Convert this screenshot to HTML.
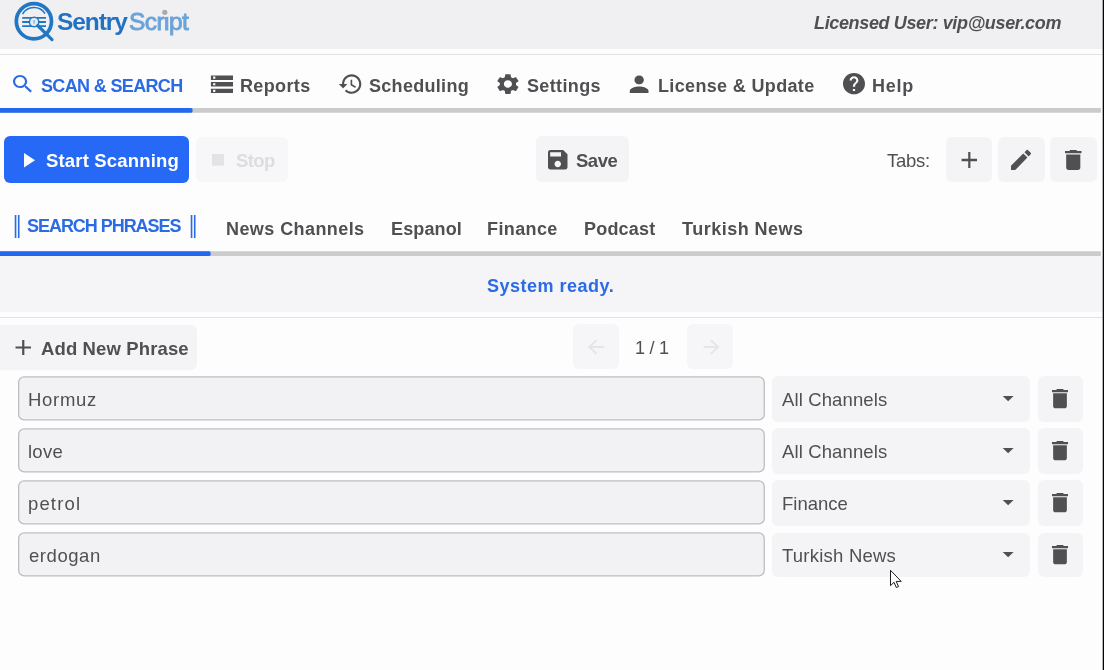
<!DOCTYPE html>
<html><head><meta charset="utf-8"><title>SentryScript</title>
<style>
*{box-sizing:border-box;margin:0;padding:0}
html,body{width:1104px;height:670px;overflow:hidden;background:#fefdfe;font-family:"Liberation Sans","DejaVu Sans",sans-serif;color:#4a4a4d}
.abs{position:absolute}
.t{position:absolute;white-space:nowrap;line-height:1;will-change:transform}
#hdr{left:0;top:0;width:1104px;height:49px;background:#f0eff1}
.hl{left:0;width:1104px;height:1px;background:#e2e1e4}
.btn{position:absolute;background:#f4f3f5;border-radius:6px}
.inp{position:absolute;left:18px;width:747px;height:44px;border:1px solid #bfbfc2;border-radius:6px;background:#f2f1f3}
.sel{position:absolute;left:772px;width:258px;height:46px;background:#f4f3f5;border-radius:6px}
.del{position:absolute;left:1038px;width:45px;height:46px;background:#f4f3f5;border-radius:6px}
.bb{font-size:20px;color:#2b6be4;transform:scaleY(1.55);transform-origin:50% 50%}
svg{position:absolute;left:0;top:0;overflow:visible}
</style></head><body>
<div class="abs" id="hdr"></div>
<div class="abs hl" style="top:54px"></div>
<div class="abs" style="left:0;top:256px;width:1104px;height:56px;background:#f5f4f7"></div>
<div class="abs hl" style="top:317px"></div>

<div class="btn" style="left:4px;top:136px;width:185px;height:47px;background:#2669f7"></div>
<div class="btn" style="left:196px;top:137px;width:92px;height:45px;background:#f7f6f8"></div>
<div class="btn" style="left:536px;top:136px;width:93px;height:46px"></div>
<div class="btn" style="left:946px;top:137px;width:46px;height:45px"></div>
<div class="btn" style="left:998px;top:137px;width:47px;height:45px"></div>
<div class="btn" style="left:1050px;top:137px;width:47px;height:45px"></div>
<div class="btn" style="left:0;top:325px;width:197px;height:45px;border-radius:0 6px 6px 0"></div>
<div class="btn" style="left:573px;top:324px;width:46px;height:45px;background:#f6f5f7"></div>
<div class="btn" style="left:687px;top:324px;width:46px;height:45px;background:#f6f5f7"></div>
<div class="sel" style="top:376px"></div><div class="del" style="top:376px"></div>
<div class="sel" style="top:428px"></div><div class="del" style="top:428px"></div>
<div class="sel" style="top:480px"></div><div class="del" style="top:480px"></div>
<div class="sel" style="top:533px;height:44px"></div><div class="del" style="top:533px;height:44px"></div>

<svg width="1104" height="670" viewBox="0 0 1104 670">
<rect x="-3" y="107.900" width="1104" height="4.800" rx="1" fill="#cbcacd"/>
<rect x="-3" y="107.900" width="195.500" height="4.800" rx="1.500" fill="#2468f2"/>
<rect x="-3" y="251.200" width="1104" height="4.700" rx="1" fill="#cbcacd"/>
<rect x="-3" y="251.200" width="213.600" height="4.700" rx="1.500" fill="#2468f2"/>
<rect x="18.650" y="376.90" width="745.600" height="43" rx="5.500" fill="#f2f1f3" stroke="#bebdc1" stroke-width="1.300"/>
<rect x="18.650" y="428.90" width="745.600" height="43" rx="5.500" fill="#f2f1f3" stroke="#bebdc1" stroke-width="1.300"/>
<rect x="18.650" y="480.90" width="745.600" height="43" rx="5.500" fill="#f2f1f3" stroke="#bebdc1" stroke-width="1.300"/>
<rect x="18.650" y="532.90" width="745.600" height="43" rx="5.500" fill="#f2f1f3" stroke="#bebdc1" stroke-width="1.300"/>
<g fill="none" stroke="#2277c4">
<circle cx="33.9" cy="21.3" r="17.6" stroke-width="3.7"/>
<path d="M22.5 14.2 A13.2 13.2 0 0 1 45 13.6" stroke-width="1.5"/>
<path d="M22.2 17.9H46M22.2 22H46M22.2 26.100H46" stroke-width="1.8"/>
<circle cx="34.1" cy="22" r="4.700" stroke-width="1.5" fill="#e4ebf4"/>
<path d="M34.1 20v3.600" stroke-width="1.300" stroke="#7faedb"/>
<path d="M37.7 25.500L52 39.600" stroke-width="3.200" stroke-linecap="round"/>
</g>
<path fill="#2b6be4" transform="translate(13.00 75.00) scale(1.0863 1.0006) translate(-3 -3)" d="M15.5 14h-.79l-.28-.27C15.41 12.59 16 11.11 16 9.5 16 5.91 13.09 3 9.5 3S3 5.91 3 9.5 5.91 16 9.5 16c1.61 0 3.09-.59 4.23-1.57l.27.28v.79l5 4.99L20.49 19l-4.99-5zm-6 0C7.01 14 5 11.99 5 9.5S7.01 5 9.5 5 14 7.01 14 9.5 11.99 14 9.5 14z"/>
<path fill="#505053" transform="translate(210.90 75.50) scale(1.1050 1.0938) translate(-2 -4)" d="M2 20h20v-4H2v4zm2-3h2v2H4v-2zM2 4v4h20V4H2zm4 3H4V5h2v2zm-4 7h20v-4H2v4zm2-3h2v2H4v-2z"/>
<path fill="#505053" transform="translate(338.80 74.30) scale(1.0714 1.0833) translate(-1 -3)" d="M13 3c-4.97 0-9 4.03-9 9H1l3.89 3.89.07.14L9 12H6c0-3.870 3.130-7 7-7s7 3.130 7 7-3.130 7-7 7c-1.930 0-3.680-.79-4.940-2.060l-1.420 1.420C8.270 19.990 10.510 21 13 21c4.970 0 9-4.030 9-9s-4.030-9-9-9zm-1 5v5l4.280 2.540.72-1.210-3.500-2.080V8H12z"/>
<path fill="#505053" transform="translate(497.30 73.80) scale(1.1277 1.0250) translate(-2.6 -2)" d="M19.14 12.94c.04-.3.06-.61.06-.94 0-.32-.02-.64-.07-.94l2.030-1.580c.18-.14.23-.41.12-.61l-1.920-3.320c-.12-.22-.37-.29-.59-.22l-2.390.96c-.5-.38-1.030-.7-1.620-.94l-.36-2.540c-.04-.24-.24-.41-.48-.41h-3.840c-.24 0-.43.17-.47.41l-.36 2.540c-.59.24-1.130.57-1.620.94l-2.390-.96c-.22-.08-.47 0-.59.22L2.740 8.870c-.12.21-.08.47.12.61l2.030 1.580c-.05.3-.09.63-.09.94s.02.64.07.94l-2.030 1.580c-.18.14-.23.41-.12.61l1.920 3.320c.12.22.37.29.59.22l2.390-.96c.5.38 1.030.7 1.620.94l.36 2.540c.05.24.24.41.48.41h3.840c.24 0 .44-.17.47-.41l.36-2.540c.59-.24 1.130-.56 1.620-.94l2.390.96c.22.08.47 0 .59-.22l1.920-3.320c.12-.22.07-.47-.12-.61l-2.010-1.580zM12 15.600c-1.980 0-3.600-1.620-3.600-3.600s1.620-3.600 3.600-3.600 3.600 1.620 3.600 3.600-1.620 3.600-3.600 3.600z"/>
<path fill="#505053" transform="translate(629.80 75.50) scale(1.1688 1.0938) translate(-4 -4)" d="M12 12c2.21 0 4-1.79 4-4s-1.79-4-4-4-4 1.79-4 4 1.79 4 4 4zm0 2c-2.67 0-8 1.340-8 4v2h16v-2c0-2.660-5.330-4-8-4z"/>
<path fill="#505053" transform="translate(843.00 73.00) scale(1.1000 1.0650) translate(-2 -2)" d="M12 2C6.48 2 2 6.48 2 12s4.48 10 10 10 10-4.48 10-10S17.52 2 12 2zm1 17h-2v-2h2v2zm2.070-7.750l-.9.920C13.450 12.900 13 13.500 13 15h-2v-.5c0-1.100.450-2.100 1.170-2.830l1.240-1.260c.370-.36.590-.86.590-1.410 0-1.100-.9-2-2-2s-2 .9-2 2H8c0-2.210 1.790-4 4-4s4 1.790 4 4c0 .880-.360 1.680-.930 2.250z"/>
<path fill="#fff" transform="translate(24.00 153.00) scale(1.0000 1.0357) translate(-8 -5)" d="M8 5v14l11-7z"/>
<path fill="#e4e2e6" transform="translate(212.00 154.00) scale(1.0000 0.9667) translate(-6 -6)" d="M6 6h12v12H6z"/>
<path fill="#505053" transform="translate(548.00 150.00) scale(1.0833 1.0833) translate(-3 -3)" d="M17 3H5c-1.11 0-2 .9-2 2v14c0 1.100.890 2 2 2h14c1.100 0 2-.9 2-2V7l-4-4zm-5 16c-1.660 0-3-1.340-3-3s1.340-3 3-3 3 1.340 3 3-1.340 3-3 3zm3-10H5V5h10v4z"/>
<path fill="#505053" transform="translate(961.60 152.00) scale(1.1000 1.1429) translate(-5 -5)" d="M19 13h-6v6h-2v-6H5v-2h6V5h2v6h6v2z"/>
<path fill="#505053" transform="translate(1011.00 149.80) scale(1.1111 1.1222) translate(-3 -3)" d="M3 17.25V21h3.75L17.81 9.94l-3.750-3.750L3 17.250zM20.710 7.040c.39-.39.39-1.020 0-1.410l-2.340-2.340c-.39-.39-1.020-.39-1.410 0l-1.830 1.830 3.750 3.750 1.830-1.830z"/>
<path fill="#505053" transform="translate(1065.00 150.00) scale(1.1786 1.1111) translate(-5 -3)" d="M6 19c0 1.100.9 2 2 2h8c1.100 0 2-.9 2-2V7H6v12zM19 4h-3.500l-1-1h-5l-1 1H5v2h14V4z"/>
<path fill="#505053" transform="translate(15.50 340.00) scale(1.1071 1.0714) translate(-5 -5)" d="M19 13h-6v6h-2v-6H5v-2h6V5h2v6h6v2z"/>
<path fill="#e5e4e8" transform="translate(588.00 339.50) scale(1.0000 0.9375) translate(-4 -4)" d="M20 11H7.83l5.590-5.590L12 4l-8 8 8 8 1.410-1.410L7.830 13H20v-2z"/>
<path fill="#e5e4e8" transform="translate(703.50 339.50) scale(1.0000 0.9375) translate(-4 -4)" d="M12 4l-1.410 1.410L16.170 11H4v2h12.170l-5.580 5.590L12 20l8-8z"/>
<path fill="#505053" transform="translate(1002.70 396.00) scale(1.0900 1.0600) translate(-7 -10)" d="M7 10l5 5 5-5z"/>
<path fill="#505053" transform="translate(1052.00 389.00) scale(1.1429 1.0722) translate(-5 -3)" d="M6 19c0 1.100.9 2 2 2h8c1.100 0 2-.9 2-2V7H6v12zM19 4h-3.500l-1-1h-5l-1 1H5v2h14V4z"/>
<path fill="#505053" transform="translate(1002.70 448.00) scale(1.0900 1.0600) translate(-7 -10)" d="M7 10l5 5 5-5z"/>
<path fill="#505053" transform="translate(1052.00 441.00) scale(1.1429 1.0722) translate(-5 -3)" d="M6 19c0 1.100.9 2 2 2h8c1.100 0 2-.9 2-2V7H6v12zM19 4h-3.500l-1-1h-5l-1 1H5v2h14V4z"/>
<path fill="#505053" transform="translate(1002.70 500.00) scale(1.0900 1.0600) translate(-7 -10)" d="M7 10l5 5 5-5z"/>
<path fill="#505053" transform="translate(1052.00 493.00) scale(1.1429 1.0722) translate(-5 -3)" d="M6 19c0 1.100.9 2 2 2h8c1.100 0 2-.9 2-2V7H6v12zM19 4h-3.500l-1-1h-5l-1 1H5v2h14V4z"/>
<path fill="#505053" transform="translate(1002.70 552.00) scale(1.0900 1.0600) translate(-7 -10)" d="M7 10l5 5 5-5z"/>
<path fill="#505053" transform="translate(1052.00 545.00) scale(1.1429 1.0722) translate(-5 -3)" d="M6 19c0 1.100.9 2 2 2h8c1.100 0 2-.9 2-2V7H6v12zM19 4h-3.500l-1-1h-5l-1 1H5v2h14V4z"/>
</svg>
<div class="t" style="left:814.30px;top:13.90px;font-size:18px;letter-spacing:-0.356px;color:#505053;font-weight:bold;font-style:italic">Licensed User: vip@user.com</div>
<div class="t" style="left:57.30px;top:9.90px;font-size:24.5px;letter-spacing:-1.085px;color:#2272c3;font-weight:bold">Sentry</div>
<div class="t" style="left:129.00px;top:9.90px;font-size:24.5px;letter-spacing:-0.564px;color:#6aa3d8;-webkit-text-stroke:0.9px #6aa3d8">Script</div>
<div class="t" style="left:41.30px;top:77.00px;font-size:18px;letter-spacing:-0.651px;color:#2b6be4;font-weight:bold">SCAN &amp; SEARCH</div>
<div class="t" style="left:239.80px;top:77.00px;font-size:18px;letter-spacing:0.367px;color:#505053;font-weight:bold">Reports</div>
<div class="t" style="left:368.80px;top:77.00px;font-size:18px;letter-spacing:0.299px;color:#505053;font-weight:bold">Scheduling</div>
<div class="t" style="left:526.80px;top:77.00px;font-size:18px;letter-spacing:0.358px;color:#505053;font-weight:bold">Settings</div>
<div class="t" style="left:658.30px;top:77.00px;font-size:18px;letter-spacing:0.345px;color:#505053;font-weight:bold">License &amp; Update</div>
<div class="t" style="left:872.00px;top:77.00px;font-size:18px;letter-spacing:0.763px;color:#505053;font-weight:bold">Help</div>
<div class="t" style="left:46.00px;top:151.80px;font-size:18.5px;letter-spacing:0.173px;color:#ffffff;font-weight:bold">Start Scanning</div>
<div class="t" style="left:236.00px;top:151.80px;font-size:18.5px;letter-spacing:-0.600px;color:#dddce0;font-weight:bold">Stop</div>
<div class="t" style="left:576.00px;top:151.80px;font-size:18.5px;letter-spacing:-0.472px;color:#505053;font-weight:bold">Save</div>
<div class="t" style="left:887.00px;top:151.80px;font-size:18.5px;letter-spacing:-0.269px;color:#505053">Tabs:</div>
<div class="t" style="left:27.00px;top:217.20px;font-size:18px;letter-spacing:-1.040px;color:#2b6be4;font-weight:bold">SEARCH PHRASES</div>
<div class="t" style="left:225.80px;top:219.50px;font-size:18px;letter-spacing:0.423px;color:#505053;font-weight:bold">News Channels</div>
<div class="t" style="left:391.00px;top:219.50px;font-size:18px;letter-spacing:0.131px;color:#505053;font-weight:bold">Espanol</div>
<div class="t" style="left:486.70px;top:219.50px;font-size:18px;letter-spacing:0.382px;color:#505053;font-weight:bold">Finance</div>
<div class="t" style="left:583.70px;top:219.50px;font-size:18px;letter-spacing:0.195px;color:#505053;font-weight:bold">Podcast</div>
<div class="t" style="left:681.70px;top:219.50px;font-size:18px;letter-spacing:0.492px;color:#505053;font-weight:bold">Turkish News</div>
<div class="t" style="left:487.40px;top:276.70px;font-size:18px;letter-spacing:0.505px;color:#2b6be4;font-weight:bold">System ready.</div>
<div class="t" style="left:41.00px;top:339.80px;font-size:18.5px;letter-spacing:0.123px;color:#505053;font-weight:bold">Add New Phrase</div>
<div class="t" style="left:634.70px;top:338.60px;font-size:18px;letter-spacing:-0.253px;color:#505053">1 / 1</div>
<div class="t" style="left:28.00px;top:390.80px;font-size:18.5px;letter-spacing:0.698px;color:#505053">Hormuz</div>
<div class="t" style="left:27.60px;top:442.70px;font-size:18.5px;letter-spacing:0.250px;color:#505053">love</div>
<div class="t" style="left:27.60px;top:494.70px;font-size:18.5px;letter-spacing:1.147px;color:#505053">petrol</div>
<div class="t" style="left:28.60px;top:546.60px;font-size:18.5px;letter-spacing:0.549px;color:#505053">erdogan</div>
<div class="t" style="left:782.00px;top:390.80px;font-size:18.5px;letter-spacing:0.126px;color:#505053">All Channels</div>
<div class="t" style="left:782.00px;top:442.70px;font-size:18.5px;letter-spacing:0.126px;color:#505053">All Channels</div>
<div class="t" style="left:781.80px;top:494.80px;font-size:18.5px;letter-spacing:-0.005px;color:#505053">Finance</div>
<div class="t" style="left:781.90px;top:546.60px;font-size:18.5px;letter-spacing:0.226px;color:#505053">Turkish News</div>
<div class="t bb" style="left:12.500px;top:216.500px">&#8214;</div>
<div class="t bb" style="left:189.400px;top:216.500px">&#8214;</div>
<svg width="1104" height="670" viewBox="0 0 1104 670"><rect x="164" y="10" width="6" height="6.800" fill="#f0eff1"/><circle cx="164.800" cy="12.300" r="2.600" fill="#aaa9ad"/><path d="M890.5 570.300v15.300l3.500-3.300 2.300 5.200 2.200-.9-2.300-5.200h5z" fill="#fff" stroke="#111" stroke-width="0.950" stroke-linejoin="round"/></svg>
<svg width="1104" height="670" viewBox="0 0 1104 670"><rect x="1102.700" y="0" width="1.300" height="670" fill="#050505"/></svg>
</body></html>
